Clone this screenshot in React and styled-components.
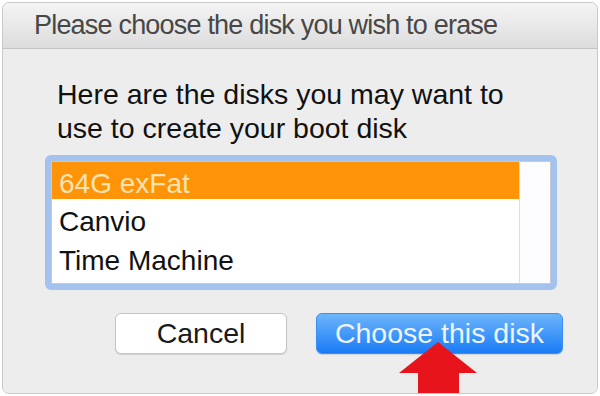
import React from 'react'
import styled, { createGlobalStyle } from 'styled-components'

const GlobalStyle = createGlobalStyle`
  html, body {
    margin: 0;
    padding: 0;
    background: #ffffff;
    font-family: 'Liberation Sans', Arial, sans-serif;
  }
`

const Window = styled.div`
  margin: 2px;
  width: 594px;
  height: 390px;
  border: 1px solid #c9c9c9;
  border-radius: 7px;
  background: #ececec;
  overflow: hidden;
  display: flex;
  flex-direction: column;
  position: relative;
`

const TitleBar = styled.div`
  height: 45px;
  flex-shrink: 0;
  display: flex;
  align-items: center;
  padding-left: 31px;
  background: linear-gradient(#f4f4f4, #dddddd);
  border-bottom: 1px solid #c4c4c4;
  font-size: 27px;
  letter-spacing: -0.8px;
  color: #474747;
`

const Body = styled.div`
  flex: 1;
  display: flex;
  flex-direction: column;
  padding: 28px 0 0 42px;
  background: #ededed;
`

const Message = styled.div`
  font-size: 28.5px;
  line-height: 34px;
  color: #111;
  padding-left: 12px;
`

const ListRing = styled.div`
  margin-top: 10px;
  width: 500px;
  border: 6px solid #a4c2ee;
  border-radius: 6px;
  background: #fff;
  display: flex;
`

const List = styled.div`
  flex: 1;
  padding: 0 0 6px;
  border: 1px solid #c9c9d0;
  border-right: none;
`

const Row = styled.div`
  height: ${(p) => (p.$selected ? 37 : 39)}px;
  box-sizing: border-box;
  padding: 7px 0 0 7px;
  display: flex;
  align-items: center;
  font-size: 28px;
  background: ${(p) => (p.$selected ? '#ff9408' : '#fff')};
  color: ${(p) => (p.$selected ? '#fde3b0' : '#111')};
`

const Scroller = styled.div`
  width: 30px;
  background: #fdfcff;
  border: 1px solid #c9c9d0;
  border-left: 1px solid #dedde3;
`

const Buttons = styled.div`
  display: flex;
  gap: 29px;
  margin-top: 23px;
  padding-left: 70px;
`

const Button = styled.div`
  height: 41px;
  box-sizing: border-box;
  width: ${(p) => p.$w}px;
  border-radius: 6px;
  display: flex;
  align-items: center;
  justify-content: center;
  font-size: 28.5px;
  border: 1px solid ${(p) => (p.$primary ? '#3b8ef2' : '#c4c4c4')};
  background: ${(p) =>
    p.$primary ? 'linear-gradient(#6db5fc, #1a7cf5)' : '#ffffff'};
  color: ${(p) => (p.$primary ? '#eef4ff' : '#1a1a1a')};
  box-shadow: 0 1px 1px rgba(0, 0, 0, 0.12);
`

const Arrow = styled.svg`
  position: absolute;
  left: 394px;
  top: 339px;
`

export default function App() {
  return (
    <>
      <GlobalStyle />
      <Window>
        <TitleBar>Please choose the disk you wish to erase</TitleBar>
        <Body>
          <Message>
            Here are the disks you may want to
            <br />
            use to create your boot disk
          </Message>
          <ListRing>
            <List>
              <Row $selected>64G exFat</Row>
              <Row>Canvio</Row>
              <Row>Time Machine</Row>
            </List>
            <Scroller />
          </ListRing>
          <Buttons>
            <Button $w={172}>Cancel</Button>
            <Button $w={247} $primary>
              Choose this disk
            </Button>
          </Buttons>
        </Body>
        <Arrow width="82" height="60" viewBox="0 0 82 60">
          <polygon
            points="41,0 80,31 62,31 62,60 21,60 21,31 2,31"
            fill="#e8141c"
          />
        </Arrow>
      </Window>
    </>
  )
}
